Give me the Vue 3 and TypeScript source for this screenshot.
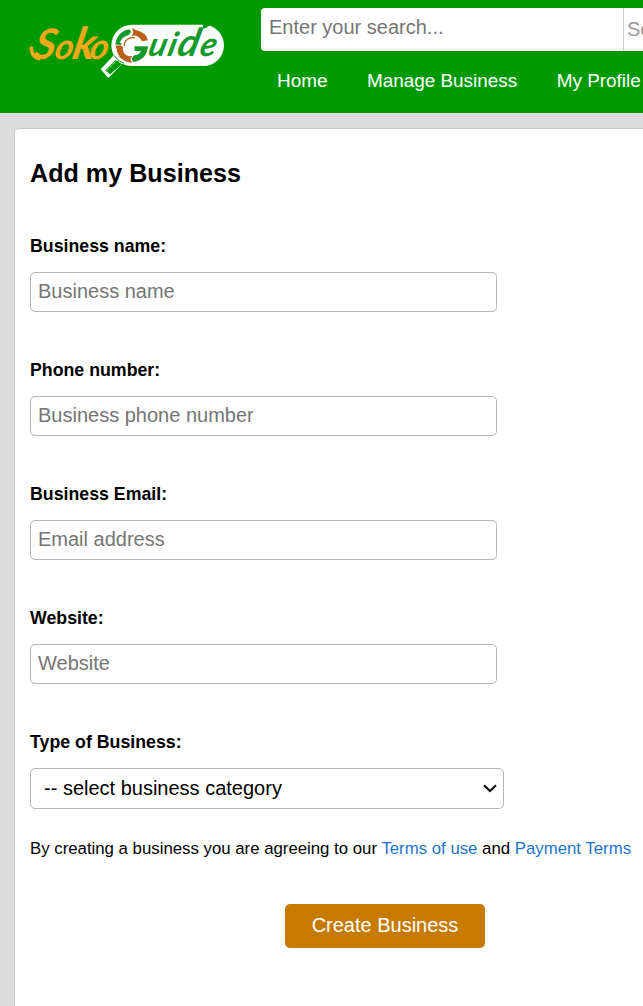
<script setup lang="ts">
import { ref } from 'vue'

interface Field {
  id: string
  label: string
  placeholder: string
  type: string
}

const navigation: string[] = ['Home', 'Manage Business', 'My Profile']
const fields: Field[] = [
  { id: 'name', label: 'Business name:', placeholder: 'Business name', type: 'text' },
  { id: 'phone', label: 'Phone number:', placeholder: 'Business phone number', type: 'tel' },
  { id: 'email', label: 'Business Email:', placeholder: 'Email address', type: 'email' },
  { id: 'website', label: 'Website:', placeholder: 'Website', type: 'text' },
]
const values = ref<Record<string, string>>({ name: '', phone: '', email: '', website: '' })
</script>

<template>
  <div class="page">
    <header class="header">
      <svg class="logo" viewBox="0 0 645 240" role="img" aria-label="SokoGuide">
        <!-- lens and handle -->
        <rect x="274" y="44" width="338" height="124" rx="62" fill="#fff" />
        <path d="M284 133L312 157L265 204L242 178Z" fill="#fff" />
        <path d="M288 149L306 163L270 193L256 181Z" fill="#090" />
        <path d="M290 151L260 183" stroke="#fff" stroke-width="3" stroke-dasharray="3 3" />
        <path d="M283 137Q292 153 312 160" fill="none" stroke="#090" stroke-width="3" />
        <!-- compass ring forming the G -->
        <path d="M286 104Q291 65 328 58L334 66L325 76Q306 81 300 96L306 104Z" fill="#159a2b" />
        <path d="M336 53L347 60Q377 66 384 91L366 94Q359 79 341 76L335 80L340 67Z" fill="#b9601b" />
        <path d="M286 107L301 106L309 111Q305 131 327 139L337 138L331 148L336 158Q294 154 290 117Z" fill="#b9601b" />
        <path d="M343 109H384Q381 150 339 156L335 147L340 137Q358 135 363 123H344Z" fill="#159a2b" />
        <path d="M313 108A24 24 0 0 1 344 84" fill="none" stroke="#b9601b" stroke-width="4" />
        <path d="M548 44H570L560 53L550 56Z" fill="#090" />
        <!-- tail of the S -->
        <path d="M34 114Q35 141 56 145" fill="none" stroke="#f0a81c" stroke-width="11" stroke-linecap="round" />
        <text class="soko" transform="translate(0 147) skewX(-12)"><tspan class="soko-s" x="36">S</tspan><tspan x="100">o</tspan><tspan class="soko-k" x="153">k</tspan><tspan x="205">o</tspan></text>
        <text class="uide" transform="translate(0 138) skewX(-14)"><tspan x="380">u</tspan><tspan x="439">i</tspan><tspan class="uide-d" x="467">d</tspan><tspan x="535">e</tspan></text>
      </svg>
      <div class="tools">
        <div class="search">
          <input class="query" type="text" placeholder="Enter your search..." aria-label="Search" />
          <span class="scope">Se</span>
        </div>
        <nav class="nav">
          <a v-for="item in navigation" :key="item">{{ item }}</a>
        </nav>
      </div>
    </header>

    <main class="card">
      <h1>Add my Business</h1>
      <form @submit.prevent>
        <div v-for="field in fields" :key="field.id" class="field">
          <label :for="field.id">{{ field.label }}</label>
          <input :id="field.id" v-model="values[field.id]" :type="field.type" :placeholder="field.placeholder" />
        </div>
        <div class="field category">
          <label id="category-label">Type of Business:</label>
          <div class="select" role="combobox" aria-labelledby="category-label">
            <span>-- select business category</span>
            <svg class="chevron" viewBox="0 0 14 10"><path d="M1 1.3L7 7L13 1.3" /></svg>
          </div>
        </div>
        <p class="terms">By creating a business you are agreeing to our <a>Terms of use</a> and <a>Payment Terms</a></p>
        <button class="submit" type="submit">Create Business</button>
      </form>
    </main>
  </div>
</template>

<style>
body {
  overflow: hidden;
}
</style>

<style scoped>
.page {
  box-sizing: border-box;
  width: 100%;
  height: 1006px;
  overflow: hidden;
  background: #ddd;
  font-family: "Liberation Sans", Arial, sans-serif;
  color: #000;
}
.header {
  display: flex;
  height: 113px;
  background: #090;
  overflow: hidden;
}
.logo {
  flex: none;
  width: 215px;
  height: 80px;
  margin: 10px 26px 0 20px;
}
.soko {
  font: italic 700 106px Lato, sans-serif;
  fill: #f0a81c;
}
.soko-s {
  font-size: 126px;
}
.soko-k {
  font-size: 132px;
}
.uide {
  font: italic 700 100px Lato, sans-serif;
  fill: #159a2b;
}
.uide-d {
  font-size: 116px;
}
.tools {
  flex: none;
  width: 520px;
  padding-top: 8px;
}
.search {
  display: flex;
  height: 43px;
  background: #fff;
  border-radius: 4px;
  overflow: hidden;
}
.query {
  box-sizing: border-box;
  flex: none;
  width: 362px;
  border: 0;
  padding: 0 8px 5px;
  outline: 0;
  background: transparent;
  font: 20px "Liberation Sans", Arial, sans-serif;
}
.query::placeholder,
.field input::placeholder {
  color: #757575;
  opacity: 1;
}
.scope {
  border-left: 1px solid #ccc;
  padding-left: 3px;
  color: #999;
  font-size: 20px;
  line-height: 42px;
}
.nav {
  display: flex;
  gap: 39.6px;
  padding: 19px 0 0 16px;
  color: #fff;
  font-size: 18.9px;
  line-height: 22px;
  white-space: nowrap;
}
.card {
  box-sizing: border-box;
  width: 700px;
  height: 900px;
  margin: 15px 0 0 14px;
  padding: 29px 15px 0;
  border: 1px solid #c8c8c8;
  border-radius: 5px;
  background: #fff;
}
h1 {
  margin: 0 0 47px;
  font-size: 25.15px;
  line-height: 30px;
}
.field {
  display: flex;
  flex-direction: column;
  height: 124px;
}
.field label {
  margin-bottom: 15px;
  font-size: 17.75px;
  font-weight: bold;
  line-height: 22px;
}
.field input {
  box-sizing: border-box;
  width: 467px;
  height: 40px;
  padding: 0 7px 2px;
  border: 1px solid #b5b5b5;
  border-radius: 5px;
  outline: 0;
  background: #fff;
  font: 20px "Liberation Sans", Arial, sans-serif;
}
.category {
  height: 107px;
}
.select {
  box-sizing: border-box;
  display: flex;
  align-items: center;
  justify-content: space-between;
  width: 474px;
  height: 41px;
  padding: 0 6px 0 13px;
  border: 1px solid #b5b5b5;
  border-radius: 5px;
  font-size: 20px;
}
.chevron {
  width: 14px;
  height: 10px;
}
.chevron path {
  fill: none;
  stroke: #111;
  stroke-width: 2.2;
}
.terms {
  margin: 0;
  font-size: 16.8px;
  line-height: 22px;
  white-space: nowrap;
}
.terms a {
  color: #1e74c9;
}
.submit {
  display: block;
  width: 200px;
  height: 44px;
  margin: 44px 0 0 255px;
  padding: 0 0 2px;
  border: 0;
  border-radius: 5px;
  background: #c67a00;
  color: #fff;
  font: 20px "Liberation Sans", Arial, sans-serif;
}
</style>
